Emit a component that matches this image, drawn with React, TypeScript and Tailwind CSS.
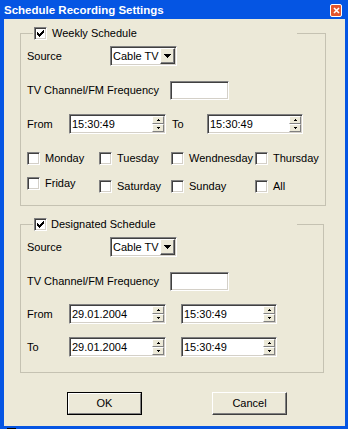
const FONT = "font-['Liberation_Sans',Arial,sans-serif]"
const SUNKEN =
  "border border-t-[#808080] border-l-[#808080] border-b-white border-r-white shadow-[inset_1px_1px_0_#404040,inset_-1px_-1px_0_#d4d0c8]"
const RAISED =
  "border border-t-white border-l-white border-b-[#404040] border-r-[#404040] shadow-[inset_-1px_-1px_0_#808080] bg-[#ece9d8]"

function Check({ checked }: { checked?: boolean }) {
  return (
    <span className={`flex h-[13px] w-[13px] shrink-0 items-center justify-center bg-white ${SUNKEN}`}>
      {checked && (
        <svg width="7" height="7" viewBox="0 0 7 7" shapeRendering="crispEdges">
          <path
            d="M0 2h1v3H0z M1 3h1v3H1z M2 4h1v3H2z M3 3h1v3H3z M4 2h1v3H4z M5 1h1v3H5z M6 0h1v3H6z"
            fill="#000"
          />
        </svg>
      )}
    </span>
  )
}

function DayBox({ label, className = "" }: { label: string; className?: string }) {
  return (
    <label className={`flex h-[13px] items-center gap-[5px] ${className}`}>
      <Check />
      <span className="text-[11px] leading-[13px]">{label}</span>
    </label>
  )
}

function Select() {
  return (
    <div className={`flex h-[20px] w-[67px] bg-white p-px ${SUNKEN}`}>
      <div className="flex-1 pl-[1px] text-[11px] leading-[16px]">Cable TV</div>
      <div className={`flex w-[15px] items-center justify-center ${RAISED}`}>
        <svg width="7" height="4" viewBox="0 0 7 4" shapeRendering="crispEdges">
          <path d="M0 0h7v1H0z M1 1h5v1H1z M2 2h3v1H2z M3 3h1v1H3z" fill="#000" />
        </svg>
      </div>
    </div>
  )
}

function SpinBtn({ up }: { up?: boolean }) {
  return (
    <div className="flex h-[8px] items-center justify-center border border-t-white border-l-white border-b-[#808080] border-r-[#808080] bg-[#ece9d8]">
      <svg width="3" height="2" viewBox="0 0 3 2" shapeRendering="crispEdges">
        <path d={up ? "M1 0h1v1H1z M0 1h3v1H0z" : "M0 0h3v1H0z M1 1h1v1H1z"} fill="#000" />
      </svg>
    </div>
  )
}

function Spin({ value, className }: { value: string; className: string }) {
  return (
    <div className={`flex h-[20px] bg-white p-px ${SUNKEN} ${className}`}>
      <div className="flex-1 pl-[1px] text-[11px] leading-[16px]">{value}</div>
      <div className="flex w-[12px] flex-col">
        <SpinBtn up />
        <SpinBtn />
      </div>
    </div>
  )
}

function GroupLegend({ label, gap }: { label: string; gap: string }) {
  return (
    <legend className={`ml-[12px] flex h-[13px] w-[264px] items-center pl-[1px] ${gap}`}>
      <Check checked />
      <span className="text-[11px] leading-[13px]">{label}</span>
    </legend>
  )
}

export default function App() {
  return (
    <div className={`flex h-[429px] w-[348px] flex-col bg-[#0555e3] pl-[4px] pr-[3px] text-black ${FONT}`}>
      <div className="flex h-[19px] shrink-0 items-center justify-between pt-[2px]">
        <span className="text-[11.5px] font-bold leading-[13px] text-white">Schedule Recording Settings</span>
        <div className="mr-[3px] flex h-[13px] w-[12px] items-center justify-center rounded-[2px] border border-white bg-[#e2542d]">
          <svg width="7" height="7" viewBox="0 0 7 7">
            <path d="M1 1l5 5M6 1L1 6" stroke="#fff" strokeWidth="1.6" />
          </svg>
        </div>
      </div>

      <div className="flex flex-1 flex-col bg-[#ece9d8] pl-[16px] text-[11px]">
        <fieldset className="mt-[8px] h-[179px] w-[306px] border border-[#c5c2b2]">
          <GroupLegend label="Weekly Schedule" gap="gap-[5px]" />
          <div className="flex flex-col pl-[6px]">
            <div className="mt-[6px] flex h-[20px] items-center">
              <span className="w-[83px]">Source</span>
              <Select />
            </div>
            <div className="mt-[15px] flex h-[19px] items-center">
              <span className="w-[143px]">TV Channel/FM Frequency</span>
              <div className={`h-[19px] w-[59px] bg-white ${SUNKEN}`} />
            </div>
            <div className="mt-[14px] flex h-[20px] items-center">
              <span className="w-[42px]">From</span>
              <Spin value="15:30:49" className="w-[97px]" />
              <span className="ml-[6px] w-[35px]">To</span>
              <Spin value="15:30:49" className="w-[96px]" />
            </div>
            <div className="mt-[18px] grid grid-cols-[72px_72px_84px_1fr] items-start">
              <DayBox label="Monday" />
              <DayBox label="Tuesday" />
              <DayBox label="Wendnesday" />
              <DayBox label="Thursday" />
            </div>
            <div className="mt-[12px] grid grid-cols-[72px_72px_84px_1fr] items-start">
              <DayBox label="Friday" />
              <DayBox label="Saturday" className="mt-[3px]" />
              <DayBox label="Sunday" className="mt-[3px]" />
              <DayBox label="All" className="mt-[3px]" />
            </div>
          </div>
        </fieldset>

        <fieldset className="mt-[12px] h-[155px] w-[304px] border border-[#c5c2b2]">
          <GroupLegend label="Designated Schedule" gap="gap-[4px]" />
          <div className="flex flex-col pl-[6px]">
            <div className="mt-[6px] flex h-[20px] items-center">
              <span className="w-[83px]">Source</span>
              <Select />
            </div>
            <div className="mt-[15px] flex h-[19px] items-center">
              <span className="w-[143px]">TV Channel/FM Frequency</span>
              <div className={`h-[19px] w-[59px] bg-white ${SUNKEN}`} />
            </div>
            <div className="mt-[13px] flex h-[20px] items-center">
              <span className="w-[42px]">From</span>
              <Spin value="29.01.2004" className="w-[97px]" />
              <Spin value="15:30:49" className="ml-[15px] w-[96px]" />
            </div>
            <div className="mt-[13px] flex h-[20px] items-center">
              <span className="w-[42px]">To</span>
              <Spin value="29.01.2004" className="w-[97px]" />
              <Spin value="15:30:49" className="ml-[15px] w-[96px]" />
            </div>
          </div>
        </fieldset>

        <div className="ml-[47px] mt-[19px] flex">
          <button className="flex h-[23px] w-[75px] items-center justify-center border border-black bg-[#ece9d8] p-0">
            <span className="flex h-full w-full items-center justify-center border border-t-white border-l-white border-b-[#808080] border-r-[#808080]">
              OK
            </span>
          </button>
          <button className={`ml-[70px] flex h-[23px] w-[75px] items-center justify-center ${RAISED}`}>
            Cancel
          </button>
        </div>
      </div>

      <div className="h-[3px] shrink-0">
        <div className="ml-[3px] mt-[2px] h-[1px] w-[9px] bg-black" />
      </div>
    </div>
  )
}
